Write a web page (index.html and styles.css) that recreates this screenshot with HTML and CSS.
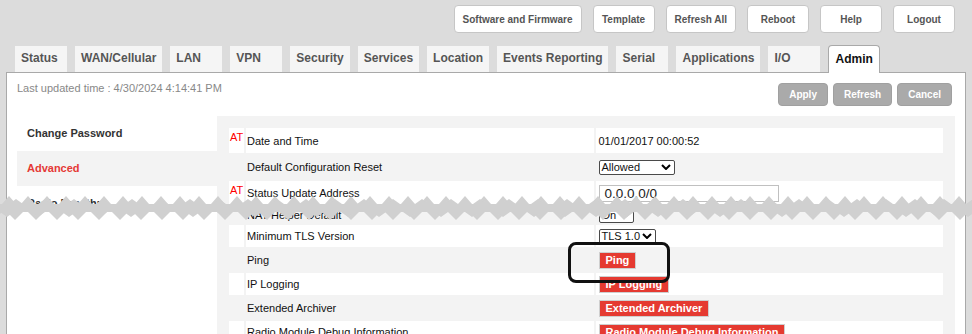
FILE: index.html
```html
<!DOCTYPE html>
<html lang="en">
<head>
<meta charset="utf-8">
<title>Admin - Advanced</title>
<link rel="stylesheet" href="styles.css">
</head>
<body>
<div class="page">
  <header class="topbar">
    <button class="top-btn">Software and Firmware</button>
    <button class="top-btn">Template</button>
    <button class="top-btn">Refresh All</button>
    <button class="top-btn">Reboot</button>
    <button class="top-btn">Help</button>
    <button class="top-btn">Logout</button>
  </header>

  <nav class="tabs">
    <span class="tab">Status</span>
    <span class="tab">WAN/Cellular</span>
    <span class="tab">LAN</span>
    <span class="tab">VPN</span>
    <span class="tab">Security</span>
    <span class="tab">Services</span>
    <span class="tab">Location</span>
    <span class="tab">Events Reporting</span>
    <span class="tab">Serial</span>
    <span class="tab">Applications</span>
    <span class="tab">I/O</span>
    <span class="tab active">Admin</span>
  </nav>

  <main class="panel">
    <div class="panel-head">
      <span class="updated">Last updated time : 4/30/2024 4:14:41 PM</span>
      <div class="actions">
        <button class="act">Apply</button>
        <button class="act">Refresh</button>
        <button class="act">Cancel</button>
      </div>
    </div>

    <div class="panel-body">
      <ul class="side">
        <li>Change Password</li>
        <li class="current">Advanced</li>
        <li>Radio Passthru</li>
      </ul>

      <div class="form">
        <div class="row white h25">
          <span class="at">AT</span><span class="lbl">Date and Time</span><span class="val">01/01/2017 00:00:52</span>
        </div>
        <div class="row h24">
          <span class="at"></span><span class="lbl">Default Configuration Reset</span>
          <span class="val"><span class="select sel-allowed"><span>Allowed</span><svg class="chev" viewBox="0 0 10 6"><path d="M1 1L5 5L9 1"/></svg></span></span>
        </div>
        <div class="row white h24">
          <span class="at">AT</span><span class="lbl">Status Update Address</span>
          <span class="val"><span class="input">0.0.0.0/0</span></span>
        </div>
        <div class="row h16">
          <span class="at"></span><span class="lbl">NAT Helper Default</span>
          <span class="val"><span class="select sel-on"><span>On</span><svg class="chev" viewBox="0 0 10 6"><path d="M1 1L5 5L9 1"/></svg></span></span>
        </div>
        <div class="row white">
          <span class="at"></span><span class="lbl">Minimum TLS Version</span>
          <span class="val"><span class="select sel-tls"><span>TLS 1.0</span><svg class="chev" viewBox="0 0 10 6"><path d="M1 1L5 5L9 1"/></svg></span></span>
        </div>
        <div class="row">
          <span class="at"></span><span class="lbl">Ping</span>
          <span class="val"><button class="red-btn">Ping</button></span>
        </div>
        <div class="row white">
          <span class="at"></span><span class="lbl">IP Logging</span>
          <span class="val"><button class="red-btn">IP Logging</button></span>
        </div>
        <div class="row">
          <span class="at"></span><span class="lbl">Extended Archiver</span>
          <span class="val"><button class="red-btn">Extended Archiver</button></span>
        </div>
        <div class="row white">
          <span class="at"></span><span class="lbl">Radio Module Debug Information</span>
          <span class="val"><button class="red-btn">Radio Module Debug Information</button></span>
        </div>
      </div>
    </div>
  </main>

  <svg class="tear" width="972" height="28" viewBox="0 0 972 28" aria-hidden="true">
    <defs>
      <pattern id="ta" width="19" height="8" patternUnits="userSpaceOnUse" x="0" y="1"><polygon class="tooth" points="2,8 9,0 16,8"/></pattern>
      <pattern id="tb" width="29" height="8" patternUnits="userSpaceOnUse" x="9" y="1"><polygon class="tooth" points="0,8 7,3 14,8"/></pattern>
      <pattern id="ba" width="21" height="8" patternUnits="userSpaceOnUse" x="5" y="17"><polygon class="tooth" points="2,0 10,8 18,0"/></pattern>
      <pattern id="bb" width="31" height="8" patternUnits="userSpaceOnUse" x="0" y="17"><polygon class="tooth" points="0,0 7,5 14,0"/></pattern>
    </defs>
    <rect class="band" x="0" y="9" width="972" height="8"/>
    <rect x="0" y="1" width="972" height="8" fill="url(#ta)"/>
    <rect x="0" y="1" width="972" height="8" fill="url(#tb)"/>
    <rect x="0" y="17" width="972" height="8" fill="url(#ba)"/>
    <rect x="0" y="17" width="972" height="8" fill="url(#bb)"/>
  </svg>

  <div class="callout"></div>
</div>
</body>
</html>
```

FILE: styles.css
```css
* { box-sizing: border-box; }

html, body {
  margin: 0;
  padding: 0;
  overflow: hidden;
}

body {
  background: #dcdcdc;
  font-family: "Liberation Sans", Arial, sans-serif;
  color: #111;
}

.page {
  position: relative;
  width: 972px;
  height: 334px;
  overflow: hidden;
}

/* ---------- top buttons ---------- */
.topbar {
  display: flex;
  justify-content: flex-end;
  gap: 11px;
  padding: 5px 17px 0 0;
}

.top-btn {
  height: 28px;
  min-width: 62px;
  padding: 0 8px;
  border: 1px solid #c6c6c6;
  border-radius: 4px;
  background: #fff;
  font-family: inherit;
  font-size: 10px;
  font-weight: bold;
  color: #555;
}

/* ---------- tabs ---------- */
.tabs {
  display: flex;
  align-items: flex-end;
  gap: 8px;
  height: 27px;
  margin-top: 12px;
  padding-left: 15px;
}

.tab {
  height: 26px;
  min-width: 52px;
  padding: 0 6px;
  background: #f5f5f5;
  font-size: 12px;
  font-weight: bold;
  line-height: 25px;
  color: #555;
}

.tab.active {
  position: relative;
  z-index: 1;
  height: 28px;
  margin-bottom: -1px;
  border: 1px solid #a9a9a9;
  border-bottom: none;
  border-radius: 4px 4px 0 0;
  background: #fff;
  color: #111;
  line-height: 26px;
}

/* ---------- panel ---------- */
.panel {
  margin: 0 6px;
  height: 300px;
  border: 1px solid #a9a9a9;
  border-bottom: none;
  background: #fff;
}

.panel-head {
  display: flex;
  justify-content: space-between;
  align-items: flex-start;
  padding: 8px 13px 0 10px;
}

.updated {
  font-size: 11px;
  line-height: 14px;
  color: #888;
}

.actions {
  display: flex;
  gap: 5px;
  margin-top: 2px;
}

.act {
  height: 23px;
  padding: 0 10px;
  border: 1px solid #a0a0a0;
  border-radius: 4px;
  background: #aaa;
  font-family: inherit;
  font-size: 10px;
  font-weight: bold;
  color: #fff;
}

.panel-body {
  display: grid;
  grid-template-columns: 200px 1fr;
  margin-top: 10px;
  padding: 0 10px;
}

/* ---------- side menu ---------- */
.side {
  list-style: none;
  margin: 0;
  padding: 0;
}

.side li {
  height: 35px;
  padding-left: 10px;
  font-size: 11px;
  font-weight: bold;
  line-height: 35px;
  color: #333;
}

.side li.current {
  background: #f3f3f3;
  color: #e53935;
}

/* ---------- form table ---------- */
.form {
  display: flex;
  flex-direction: column;
  gap: 2px;
  padding: 12px;
  background: #f3f3f3;
  min-height: 240px;
}

.row {
  display: grid;
  grid-template-columns: 15px 1fr 1fr;
  gap: 2px;
  height: 22px;
  font-size: 11px;
}

.row.h25 { height: 25px; }
.row.h24 { height: 24px; }
.row.h16 { height: 16px; }

.row.white > span { background: #fff; }

.row > span {
  display: flex;
  align-items: center;
}

.row > .at {
  align-items: flex-start;
  padding: 3px 0 0 1px;
  font-size: 11px;
  color: #f00;
}

.lbl { padding-left: 1px; }
.val { padding-left: 3px; }

.select {
  display: flex;
  align-items: center;
  justify-content: space-between;
  height: 15px;
  padding: 0 3px 0 2px;
  border: 1px solid #4a4a4a;
  border-radius: 2px;
  background: #fff;
  font-size: 11px;
  color: #111;
}

.sel-allowed { width: 76px; }
.sel-on { width: 35px; }
.sel-tls { width: 57px; }

.chev {
  width: 10px;
  height: 6px;
  fill: none;
  stroke: #000;
  stroke-width: 2;
}

.input {
  display: flex;
  align-items: center;
  width: 180px;
  height: 17px;
  padding-left: 5px;
  border: 1px solid #c0c0c0;
  background: #fff;
  font-size: 13.5px;
  color: #222;
}

.red-btn {
  height: 17px;
  padding: 0 6px;
  border: 1px solid #cfcfcf;
  background: #e53a31;
  font-family: inherit;
  font-size: 11px;
  font-weight: bold;
  line-height: 15px;
  color: #fff;
}

/* ---------- overlays ---------- */
.tear {
  position: absolute;
  left: 0;
  top: 195px;
  display: block;
}

.tear .band,
.tear .tooth {
  fill: #d0d0d0;
}

.callout {
  position: absolute;
  left: 568px;
  top: 242px;
  width: 102px;
  height: 41px;
  border: 3px solid #111;
  border-radius: 8px;
}
```
